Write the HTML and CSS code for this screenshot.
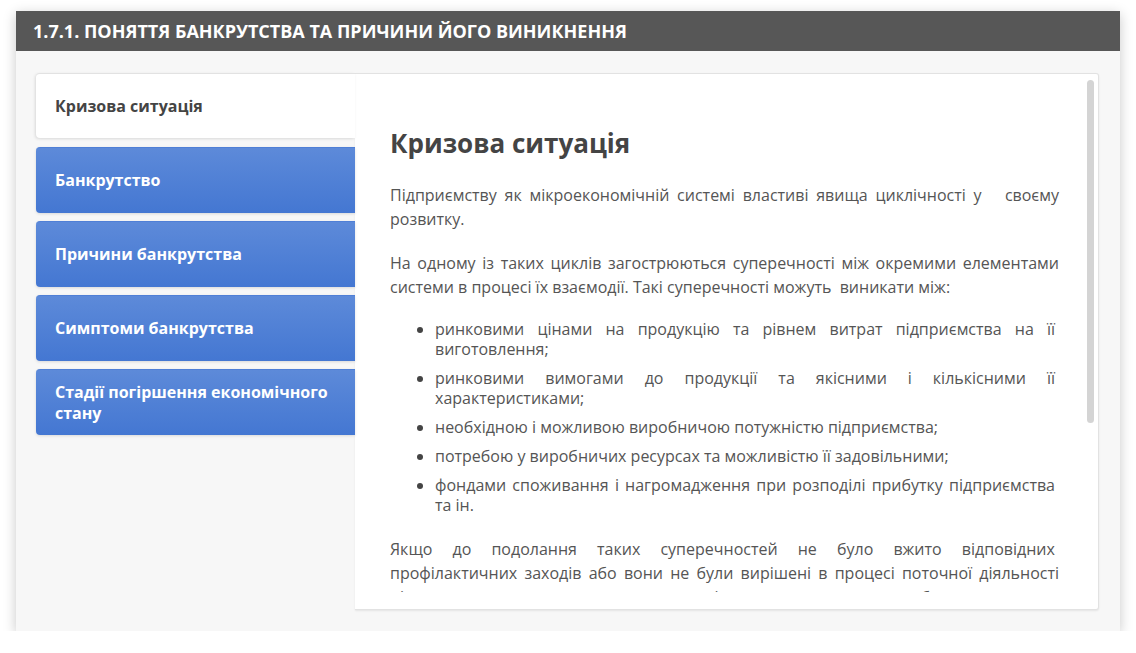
FILE: index.html
```html
<!DOCTYPE html>
<html lang="uk">
<head>
<meta charset="utf-8">
<title>1.7.1</title>
<link rel="stylesheet" href="styles.css">
</head>
<body>
<div class="card">
  <div class="card-header">1.7.1. ПОНЯТТЯ БАНКРУТСТВА ТА ПРИЧИНИ ЙОГО ВИНИКНЕННЯ</div>
  <div class="card-body">
    <div class="tabs-wrap">
      <ul class="tabs">
        <li class="tab active">Кризова ситуація</li>
        <li class="tab">Банкрутство</li>
        <li class="tab">Причини банкрутства</li>
        <li class="tab">Симптоми банкрутства</li>
        <li class="tab">Стадії погіршення економічного стану</li>
      </ul>
      <div class="panel">
        <div class="panel-scroll">
          <h2 class="panel-title">Кризова ситуація</h2>
          <p>Підприємству як мікроекономічній системі властиві явища циклічності у&nbsp;&nbsp; своєму розвитку.</p>
          <p>На одному із таких циклів загострюються суперечності між окремими елементами системи в процесі їх взаємодії. Такі суперечності можуть&nbsp; виникати між:</p>
          <ul class="list">
            <li>ринковими цінами на продукцію та рівнем витрат підприємства на її виготовлення;</li>
            <li>ринковими вимогами до продукції та якісними і кількісними її характеристиками;</li>
            <li>необхідною і можливою виробничою потужністю підприємства;</li>
            <li>потребою у виробничих ресурсах та можливістю її задовільними;</li>
            <li>фондами споживання і нагромадження при розподілі прибутку підприємства та ін.</li>
          </ul>
          <p>Якщо до подолання таких суперечностей не було вжито відповідних&nbsp; профілактичних заходів або вони не були вирішені в процесі поточної діяльності підприємства, то виникає кризова ситуація, яка може призвести до банкрутства.</p>
        </div>
        <div class="scroll-thumb"></div>
      </div>
    </div>
  </div>
</div>
</body>
</html>
```

FILE: styles.css
```css
* { box-sizing: border-box; }
html, body { margin: 0; padding: 0; background: #ffffff; }
body {
  font-family: "Open Sans", "Noto Sans", sans-serif;
  padding: 11px 16px 0 16px;
}
.card {
  width: 1104px;
  height: 620px;
  background: #f7f7f7;
  box-shadow: 0 3px 12px rgba(0,0,0,0.22);
  display: flex;
  flex-direction: column;
}
.card-header {
  height: 40px;
  background: #575757;
  color: #ffffff;
  font-weight: 700;
  font-size: 18px;
  line-height: 40px;
  padding-left: 17px;
  letter-spacing: 0;
}
.card-body {
  flex: 1;
  padding: 22px 21px 21px 20px;
  display: flex;
  min-height: 0;
}
.tabs-wrap {
  flex: 1;
  display: flex;
  min-height: 0;
}
.tabs {
  list-style: none;
  margin: 0;
  padding: 0;
  width: 319px;
  flex: none;
  display: flex;
  flex-direction: column;
  gap: 8px;
  position: relative;
  z-index: 2;
}
.tab {
  height: 66px;
  display: flex;
  align-items: center;
  padding: 0 20px 0 19px;
  font-weight: 700;
  font-size: 16px;
  line-height: 21px;
  color: #ffffff;
  background: linear-gradient(#5d8ad9, #4477d2);
  border-radius: 4px 0 0 4px;
  border-top: 1px solid #4f7fd6;
  box-shadow: 0 1px 3px rgba(0,0,0,0.12);
}
.tab.active {
  background: #ffffff;
  color: #444444;
  border-top: 1px solid #e2e2e2;
  box-shadow: -1px 1px 3px rgba(0,0,0,0.12);
  height: 65px;
  margin-bottom: 1px;
}
.panel {
  flex: 1;
  position: relative;
  background: #ffffff;
  border: 1px solid #e2e2e2;
  border-left: none;
  border-radius: 0 3px 3px 0;
  box-shadow: 0 1px 2px rgba(0,0,0,0.08);
  padding-bottom: 17px;
  display: flex;
  flex-direction: column;
  min-height: 0;
}
.panel-scroll {
  flex: 1;
  min-height: 0;
  overflow: hidden;
  padding: 51px 39px 0 35px;
  color: #555555;
  font-size: 16px;
  line-height: 24px;
}
.panel-title {
  margin: 0 0 22px 0;
  font-size: 26px;
  line-height: 36px;
  font-weight: 700;
  color: #444444;
}
.panel-scroll p {
  margin: 0 0 20px 0;
  text-align: justify;
}
.list {
  margin: 1px 0 22px 0;
  padding: 0 0 0 45px;
  list-style: disc;
}
.list li {
  line-height: 20px;
  margin-bottom: 9px;
  text-align: justify;
  padding-right: 4px;
}
.list li::marker { color: #444; }
.scroll-thumb {
  position: absolute;
  top: 6px;
  right: 4px;
  width: 7px;
  height: 343px;
  background: #d4d4d4;
  border-radius: 4px;
}
```
